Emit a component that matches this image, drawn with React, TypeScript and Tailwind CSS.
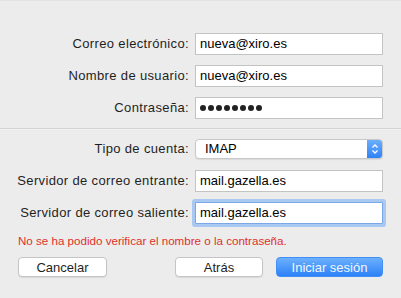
import React from "react";

const font = "font-['Liberation_Sans',Arial,sans-serif]";
const labelCls = "w-[190px] shrink-0 text-right text-[13px] tracking-[0.35px] text-[#1f1f1f] pr-[1px]";

const Row = ({ label, children }: { label: string; children: React.ReactNode }) => (
  <div className="flex items-center h-[22px]">
    <div className={labelCls}>{label}</div>
    <div className="ml-[5px] w-[188px]">{children}</div>
  </div>
);

const TextBox = ({ value, focused }: { value: string; focused?: boolean }) => (
  <div
    className={
      "h-[22px] bg-white border flex items-center px-[4px] text-[13px] text-black " +
      (focused
        ? "border-[#7aa7e6] ring-[3px] ring-[#a9c8f2] rounded-[1px]"
        : "border-[#c3c3c3]")
    }
  >
    {value}
  </div>
);

const Dots = () => (
  <div className="h-[22px] bg-white border border-[#c3c3c3] flex items-center pl-[4px] gap-[2px]">
    {Array.from({ length: 8 }).map((_, i) => (
      <span key={i} className="w-[6px] h-[6px] rounded-full bg-[#222]" />
    ))}
  </div>
);

const Select = () => (
  <div className="h-[20px] bg-white border border-[#c8c8c8] rounded-[4px] flex items-center shadow-[0_1px_1px_rgba(0,0,0,0.08)] overflow-hidden">
    <span className="flex-1 pl-[9px] text-[13px] text-black">IMAP</span>
    <div className="w-[15px] h-full bg-gradient-to-b from-[#6aaefc] to-[#2f82f7] flex items-center justify-center">
      <svg width="8" height="12" viewBox="0 0 8 12" fill="none" stroke="white" strokeWidth="1.3">
        <path d="M1.5 4.5 L4 2 L6.5 4.5" />
        <path d="M1.5 7.5 L4 10 L6.5 7.5" />
      </svg>
    </div>
  </div>
);

export default function App() {
  return (
    <div className={"w-[401px] h-[298px] bg-[#ececec] flex flex-col " + font}>
      <div className="h-[1px] bg-[#e2e2e2]" />
      <div className="flex flex-col gap-[10px] pt-[32px]">
        <Row label="Correo electrónico:">
          <TextBox value="nueva@xiro.es" />
        </Row>
        <Row label="Nombre de usuario:">
          <TextBox value="nueva@xiro.es" />
        </Row>
        <Row label="Contraseña:">
          <Dots />
        </Row>
      </div>
      <div className="mt-[9px] h-[1px] bg-[#d3d3d3]" />
      <div className="h-[1px] bg-[#f3f3f3]" />
      <div className="flex flex-col pt-[9px]">
        <div className="flex items-center h-[20px]">
          <div className={labelCls}>Tipo de cuenta:</div>
          <div className="ml-[5px] w-[188px]">
            <Select />
          </div>
        </div>
        <div className="mt-[11px]">
          <Row label="Servidor de correo entrante:">
            <TextBox value="mail.gazella.es" />
          </Row>
        </div>
        <div className="mt-[10px]">
          <Row label="Servidor de correo saliente:">
            <TextBox value="mail.gazella.es" focused />
          </Row>
        </div>
      </div>
      <div className="mt-[9px] pl-[18px] text-[11.6px] leading-[16px] text-[#e0302c]">
        No se ha podido verificar el nombre o la contraseña.
      </div>
      <div className="mt-[8px] flex items-center px-[18px]">
        <button className="w-[89px] h-[20px] bg-white border border-[#c5c5c5] rounded-[4px] text-[13px] text-[#1f1f1f] shadow-[0_1px_1px_rgba(0,0,0,0.08)]">
          Cancelar
        </button>
        <button className="ml-auto w-[88px] h-[20px] bg-white border border-[#c5c5c5] rounded-[4px] text-[13px] text-[#1f1f1f] shadow-[0_1px_1px_rgba(0,0,0,0.08)]">
          Atrás
        </button>
        <button className="ml-[13px] w-[107px] h-[20px] rounded-[4px] text-[13px] text-[#f2f7ff] bg-gradient-to-b from-[#6cb0fd] to-[#2c80f7] border border-[#3f8ff5]">
          Iniciar sesión
        </button>
      </div>
    </div>
  );
}
